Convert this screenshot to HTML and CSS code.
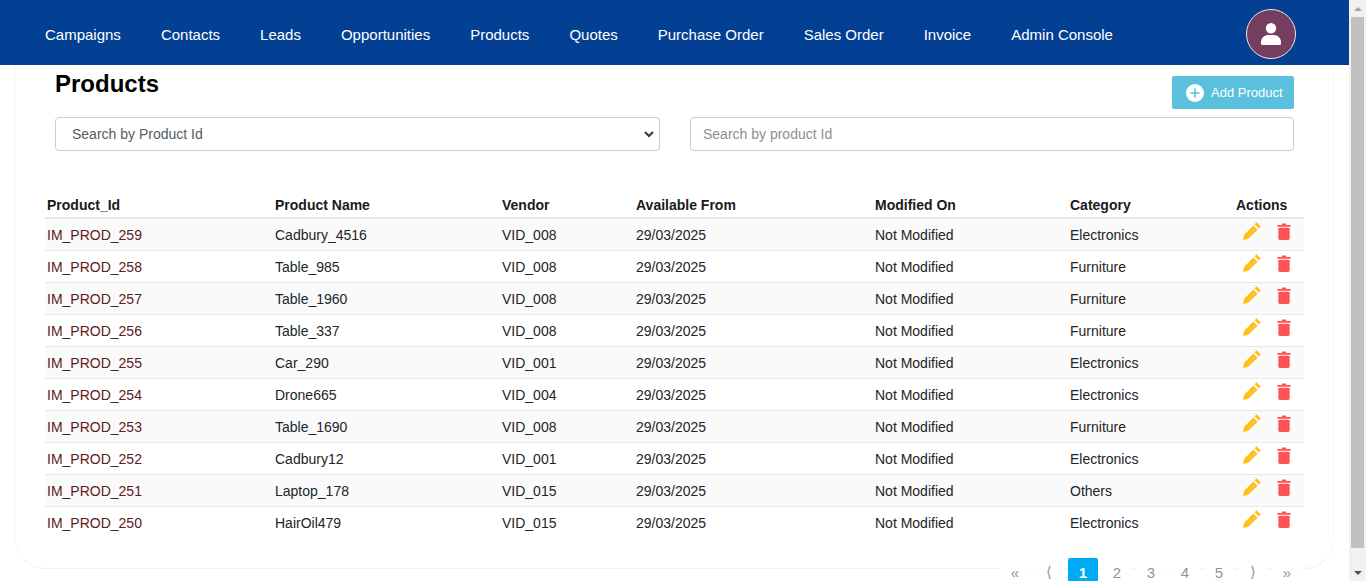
FILE: index.html
```html
<!DOCTYPE html>
<html lang="en">
<head>
    <meta charset="UTF-8">
    <meta name="viewport" content="width=device-width, initial-scale=1.0">
    <title>Products</title>
    <link rel="stylesheet" href="styles.css">
</head>
<body>
    <div class="window">
        <div class="page">
            <nav class="navbar">
                <ul class="nav-links">
                    <li>Campaigns</li>
                    <li>Contacts</li>
                    <li>Leads</li>
                    <li>Opportunities</li>
                    <li>Products</li>
                    <li>Quotes</li>
                    <li>Purchase Order</li>
                    <li>Sales Order</li>
                    <li>Invoice</li>
                    <li>Admin Console</li>
                </ul>
                <div class="avatar">
                    <svg width="20" height="22" viewBox="0 0 20 22"><circle cx="10" cy="5.300" r="5.200" fill="#fff"/><path d="M0 20.500v-1.500C0 15 3.500 12 7 12h6c3.500 0 7 3 7 7v1.500a1.500 1.500 0 0 1-1.500 1.500h-17A1.500 1.500 0 0 1 0 20.500z" fill="#fff"/></svg>
                </div>
            </nav>
            <main class="card">
                <div class="title-row">
                    <h1>Products</h1>
                    <button class="add-btn">
                        <svg width="18" height="18" viewBox="0 0 18 18"><circle cx="9" cy="9" r="9" fill="#fff"/><path d="M9 4.500v9M4.500 9h9" stroke="#5bc0de" stroke-width="1.500"/></svg>
                        Add Product
                    </button>
                </div>
                <div class="filters">
                    <div class="select-box">
                        <span>Search by Product Id</span>
                        <svg width="10" height="7" viewBox="0 0 10 7"><path d="M1 1l4 4 4-4" fill="none" stroke="#343a40" stroke-width="2"/></svg>
                    </div>
                    <div class="input-box">Search by product Id</div>
                </div>
                <table class="products">
                    <thead>
                        <tr><th>Product_Id</th><th>Product Name</th><th>Vendor</th><th>Available From</th><th>Modified On</th><th>Category</th><th class="actions-head">Actions</th></tr>
                    </thead>
                    <tbody id="rows"></tbody>
                </table>
                <div class="pagination">
                    <span class="arrow">«</span>
                    <span class="arrow">⟨</span>
                    <span class="current">1</span>
                    <span>2</span>
                    <span>3</span>
                    <span>4</span>
                    <span>5</span>
                    <span class="arrow">⟩</span>
                    <span class="arrow">»</span>
                </div>
            </main>
        </div>
        <div class="scrollbar">
            <div class="sb-up"></div>
            <div class="sb-track"><div class="sb-thumb"></div></div>
            <div class="sb-down"></div>
        </div>
    </div>
    <script>
        const products = [
            ['IM_PROD_259', 'Cadbury_4516', 'VID_008', 'Electronics'],
            ['IM_PROD_258', 'Table_985', 'VID_008', 'Furniture'],
            ['IM_PROD_257', 'Table_1960', 'VID_008', 'Furniture'],
            ['IM_PROD_256', 'Table_337', 'VID_008', 'Furniture'],
            ['IM_PROD_255', 'Car_290', 'VID_001', 'Electronics'],
            ['IM_PROD_254', 'Drone665', 'VID_004', 'Electronics'],
            ['IM_PROD_253', 'Table_1690', 'VID_008', 'Furniture'],
            ['IM_PROD_252', 'Cadbury12', 'VID_001', 'Electronics'],
            ['IM_PROD_251', 'Laptop_178', 'VID_015', 'Others'],
            ['IM_PROD_250', 'HairOil479', 'VID_015', 'Electronics']
        ];
        const pencil = '<svg width="20" height="20" viewBox="0 0 20 20"><path d="M14.500 1.200l4.300 4.300-2 2-4.300-4.300zM11.300 4.400l4.300 4.300L6 18 1 19l1-5z" fill="#ffc11f"/></svg>';
        const trash = '<svg width="14" height="17" viewBox="0 0 14 18"><path d="M0 2h4.500l.6-1.500h3.800L9.500 2H14v2H0zM1 5h12v11.500a1.500 1.500 0 0 1-1.500 1.500h-9A1.500 1.500 0 0 1 1 16.500z" fill="#ff5252"/></svg>';
        document.getElementById('rows').innerHTML = products.map(p =>
            `<tr><td class="pid">${p[0]}</td><td>${p[1]}</td><td>${p[2]}</td><td>29/03/2025</td><td>Not Modified</td><td>${p[3]}</td>` +
            `<td><div class="actions">${pencil}${trash}</div></td></tr>`
        ).join('');
    </script>
</body>
</html>
```
FILE: styles.css
```css
* {
    box-sizing: border-box;
}
html, body {
    margin: 0;
    height: 100%;
    overflow: hidden;
}
body {
    font-family: 'Liberation Sans', Arial, sans-serif;
    background-color: #ffffff;
    color: #212529;
}
.window {
    display: flex;
    height: 581px;
}
.page {
    width: 1349px;
    overflow: hidden;
}
.navbar {
    height: 65px;
    background-color: #034094;
    display: flex;
    align-items: center;
    justify-content: space-between;
    padding: 4px 53px 0 45px;
}
.nav-links {
    display: flex;
    gap: 40px;
    margin: 0;
    padding: 0;
    list-style: none;
    color: #ffffff;
    font-size: 15px;
}
.avatar {
    width: 50px;
    height: 50px;
    margin-top: -1px;
    border-radius: 50%;
    background-color: #763e5e;
    border: 1px solid #e8e8e8;
    display: flex;
    align-items: center;
    justify-content: center;
}
.card {
    margin: 0 15px;
    height: 504px;
    padding: 0 29px;
    border-bottom: 1px solid #f2f2f2;
    border-left: 1px solid #f8f8f8;
    border-right: 1px solid #f8f8f8;
    border-radius: 0 0 30px 30px;
}
.title-row {
    display: flex;
    justify-content: space-between;
    padding: 6px 10px 0;
    height: 52px;
}
h1 {
    margin: 0;
    font-size: 24px;
    line-height: 26px;
    color: #000000;
}
.add-btn {
    width: 122px;
    height: 33px;
    margin-top: 5px;
    border: none;
    border-radius: 2px;
    background-color: #5bc0de;
    color: #ffffff;
    font-family: inherit;
    font-size: 13px;
    display: flex;
    align-items: center;
    gap: 7px;
    padding: 0 0 0 14px;
}
.filters {
    display: flex;
    gap: 30px;
    padding: 0 10px;
    height: 75px;
}
.select-box, .input-box {
    height: 34px;
    border: 1px solid #ccc;
    border-radius: 4px;
    font-size: 14px;
    display: flex;
    align-items: center;
}
.select-box {
    width: 605px;
    padding: 0 5px 0 16px;
    justify-content: space-between;
    color: #555c63;
}
.input-box {
    width: 604px;
    padding: 0 12px;
    color: #8a8f94;
}
.products {
    width: 1259px;
    border-collapse: collapse;
    table-layout: fixed;
    font-size: 14px;
}
.products th {
    height: 26px;
    padding: 0 2px;
    text-align: left;
    font-weight: bold;
    border-bottom: 2px solid #e8e8e8;
    color: #1a1a1a;
}
.products th:nth-child(1), .products td:nth-child(1) { width: 228px; }
.products th:nth-child(2), .products td:nth-child(2) { width: 227px; }
.products th:nth-child(3), .products td:nth-child(3) { width: 134px; }
.products th:nth-child(4), .products td:nth-child(4) { width: 239px; }
.products th:nth-child(5), .products td:nth-child(5) { width: 195px; }
.products th:nth-child(6), .products td:nth-child(6) { width: 166px; }
.products td {
    height: 32px;
    padding: 2px 2px 0;
    border-bottom: 1px solid #e8e8e8;
    color: #212529;
}
.products tbody tr:nth-child(odd) {
    background-color: #fafafa;
}
.products tbody tr:last-child td {
    border-bottom: none;
}
.products td.pid {
    color: #5c1a1a;
}
.actions {
    display: flex;
    align-items: center;
    gap: 15px;
    padding-left: 6px;
    margin-top: -8px;
}
.pagination {
    display: flex;
    justify-content: flex-end;
    gap: 4px;
    margin-top: 20px;
    margin-right: 2px;
    font-size: 15px;
    color: #949494;
}
.pagination span {
    width: 30px;
    height: 28px;
    background-color: #ffffff;
    display: flex;
    align-items: center;
    justify-content: center;
}
.pagination .current {
    background-color: #00aaf5;
    color: #ffffff;
    font-weight: bold;
    border-radius: 2px;
}
.scrollbar {
    width: 17px;
    height: 581px;
    background-color: #f1f1f1;
    display: flex;
    flex-direction: column;
}
.sb-up, .sb-down {
    height: 17px;
    display: flex;
    align-items: center;
    justify-content: center;
}
.sb-up::after {
    content: '';
    border-left: 4px solid transparent;
    border-right: 4px solid transparent;
    border-bottom: 4px solid #a3a3a3;
}
.sb-down::after {
    content: '';
    border-left: 4px solid transparent;
    border-right: 4px solid transparent;
    border-top: 4px solid #505050;
}
.sb-track {
    flex: 1;
}
.sb-thumb {
    height: 531px;
    margin: 0 2px;
    background-color: #c1c1c1;
}
```
